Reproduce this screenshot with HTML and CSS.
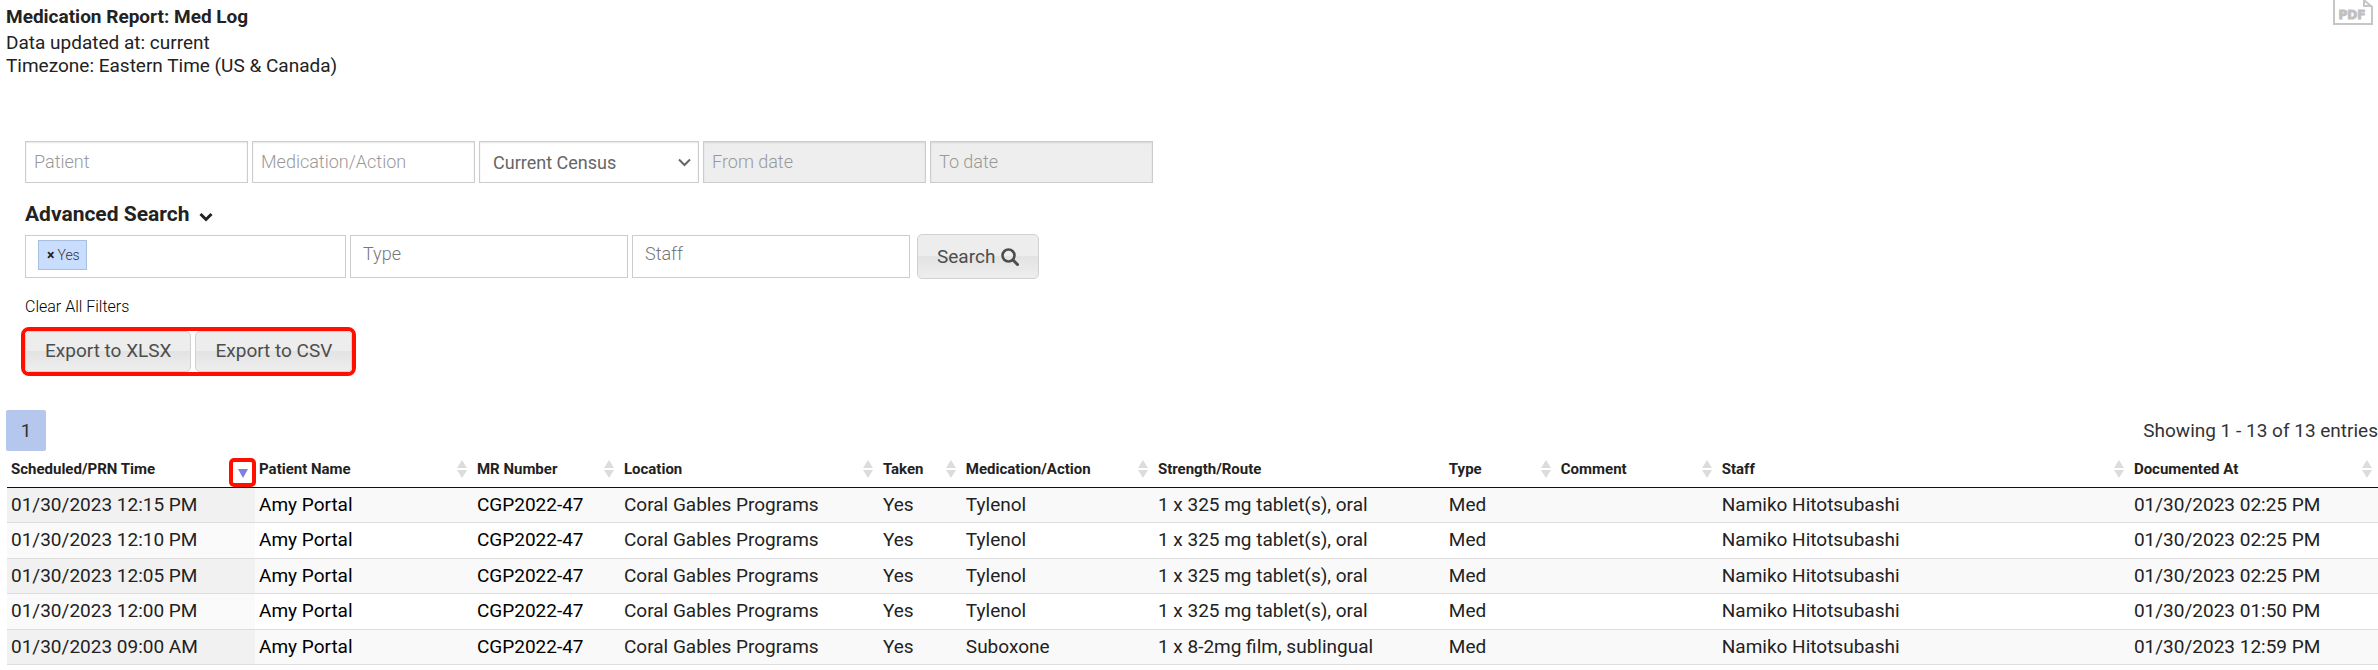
FILE: index.html
```html
<!DOCTYPE html>
<html lang="en">
<head>
<meta charset="utf-8">
<title>Medication Report: Med Log</title>
<link rel="stylesheet" href="styles.css">
</head>
<body>
<svg class="symbols" aria-hidden="true">
  <symbol id="sort-both" viewBox="0 0 10 18"><path d="M5 0L10 8H0zM0 10H10L5 18z" fill="#dcdcdc"/></symbol>
  <symbol id="sort-desc" viewBox="0 0 10 9"><path d="M0 0H10L5 9z" fill="#8080e0"/></symbol>
</svg>
<header class="report-header">
  <div class="report-info">
    <h1 class="report-title">Medication Report: Med Log</h1>
    <p class="report-line">Data updated at: current</p>
    <p class="report-line">Timezone: Eastern Time (US &amp; Canada)</p>
  </div>
  <button class="pdf-button" type="button" aria-label="Download PDF">
    <svg class="pdf-icon" viewBox="0 0 40 25"><path d="M1 0V24H39V7L31 0M31 0V6H39" fill="none" stroke="#c6c6c6" stroke-width="2"/><text class="pdf-label" x="19" y="19" text-anchor="middle">PDF</text></svg>
  </button>
</header>
<main>
  <form class="filters">
    <div class="filter-row">
      <input class="field" type="text" placeholder="Patient" aria-label="Patient">
      <input class="field" type="text" placeholder="Medication/Action" aria-label="Medication/Action">
      <span class="select-wrap">
        <select class="field census" aria-label="Census"><option>Current Census</option></select>
        <svg class="select-arrow" viewBox="0 0 13 9"><path d="M1 1.500L6.500 7L12 1.500" fill="none" stroke="#666" stroke-width="2"/></svg>
      </span>
      <input class="field" type="text" placeholder="From date" aria-label="From date" disabled>
      <input class="field" type="text" placeholder="To date" aria-label="To date" disabled>
    </div>
    <h2 class="advanced">Advanced Search
      <svg class="advanced-arrow" viewBox="0 0 14 10"><path d="M1.500 2L7 7.500L12.500 2" fill="none" stroke="#222" stroke-width="3"/></svg>
    </h2>
    <div class="filter-row advanced-row">
      <div class="picker picker-taken"><span class="tag"><button class="tag-remove" type="button" aria-label="Remove Yes">×</button>Yes</span></div>
      <input class="picker" type="text" placeholder="Type" aria-label="Type">
      <input class="picker" type="text" placeholder="Staff" aria-label="Staff">
      <button class="button search" type="button">Search
        <svg class="search-icon" viewBox="0 0 18 18"><circle cx="7.500" cy="7.500" r="6" fill="none" stroke="#4d4d4d" stroke-width="2.600"/><path d="M12 12L16.500 16.500" stroke="#4d4d4d" stroke-width="3" stroke-linecap="round"/></svg>
      </button>
    </div>
    <a class="clear" href="#">Clear All Filters</a>
    <div class="exports">
      <button class="button export" type="button">Export to XLSX</button>
      <button class="button export" type="button">Export to CSV</button>
    </div>
  </form>
  <section class="results">
    <div class="results-bar">
      <button class="page" type="button">1</button>
      <span class="summary">Showing 1 - 13 of 13 entries</span>
    </div>
    <div class="log-wrap">
    <table class="log">
      <colgroup><col class="c-time"><col class="c-patient"><col class="c-mr"><col class="c-location"><col class="c-taken"><col class="c-med"><col class="c-strength"><col class="c-type"><col class="c-comment"><col class="c-staff"><col class="c-doc"></colgroup>
      <thead>
        <tr>
          <th><div class="head">Scheduled/PRN Time<span class="callout"><svg class="sort-active"><use href="#sort-desc"/></svg></span></div></th>
          <th><div class="head">Patient Name<svg class="sort"><use href="#sort-both"/></svg></div></th>
          <th><div class="head">MR Number<svg class="sort"><use href="#sort-both"/></svg></div></th>
          <th><div class="head">Location<svg class="sort"><use href="#sort-both"/></svg></div></th>
          <th><div class="head">Taken<svg class="sort"><use href="#sort-both"/></svg></div></th>
          <th><div class="head">Medication/Action<svg class="sort"><use href="#sort-both"/></svg></div></th>
          <th><div class="head">Strength/Route</div></th>
          <th><div class="head">Type<svg class="sort"><use href="#sort-both"/></svg></div></th>
          <th><div class="head">Comment<svg class="sort"><use href="#sort-both"/></svg></div></th>
          <th><div class="head">Staff<svg class="sort"><use href="#sort-both"/></svg></div></th>
          <th><div class="head">Documented At<svg class="sort"><use href="#sort-both"/></svg></div></th>
        </tr>
      </thead>
      <tbody>
        <tr><td>01/30/2023 12:15 PM</td><td><a href="#">Amy Portal</a></td><td><a href="#">CGP2022-47</a></td><td>Coral Gables Programs</td><td>Yes</td><td>Tylenol</td><td>1 x 325 mg tablet(s), oral</td><td>Med</td><td></td><td>Namiko Hitotsubashi</td><td>01/30/2023 02:25 PM</td></tr>
        <tr><td>01/30/2023 12:10 PM</td><td><a href="#">Amy Portal</a></td><td><a href="#">CGP2022-47</a></td><td>Coral Gables Programs</td><td>Yes</td><td>Tylenol</td><td>1 x 325 mg tablet(s), oral</td><td>Med</td><td></td><td>Namiko Hitotsubashi</td><td>01/30/2023 02:25 PM</td></tr>
        <tr><td>01/30/2023 12:05 PM</td><td><a href="#">Amy Portal</a></td><td><a href="#">CGP2022-47</a></td><td>Coral Gables Programs</td><td>Yes</td><td>Tylenol</td><td>1 x 325 mg tablet(s), oral</td><td>Med</td><td></td><td>Namiko Hitotsubashi</td><td>01/30/2023 02:25 PM</td></tr>
        <tr><td>01/30/2023 12:00 PM</td><td><a href="#">Amy Portal</a></td><td><a href="#">CGP2022-47</a></td><td>Coral Gables Programs</td><td>Yes</td><td>Tylenol</td><td>1 x 325 mg tablet(s), oral</td><td>Med</td><td></td><td>Namiko Hitotsubashi</td><td>01/30/2023 01:50 PM</td></tr>
        <tr><td>01/30/2023 09:00 AM</td><td><a href="#">Amy Portal</a></td><td><a href="#">CGP2022-47</a></td><td>Coral Gables Programs</td><td>Yes</td><td>Suboxone</td><td>1 x 8-2mg film, sublingual</td><td>Med</td><td></td><td>Namiko Hitotsubashi</td><td>01/30/2023 12:59 PM</td></tr>
      </tbody>
    </table>
    </div>
  </section>
</main>
</body>
</html>
```

FILE: styles.css
```css
* { box-sizing: border-box; }
body {
  margin: 0;
  background: #fff;
  color: #222;
  font-family: Roboto, "Liberation Sans", sans-serif;
  font-size: 19px;
  line-height: 23px;
}
button, input, select { font: inherit; }
a { color: #000; text-decoration: none; }
.symbols { display: none; }

.report-header { display: flex; justify-content: space-between; align-items: flex-start; padding-left: 6px; }
.report-info { padding-top: 5px; }
.report-title { margin: 0 0 3px; font-size: 19px; line-height: 23px; font-weight: 700; }
.report-line { margin: 0; }
.pdf-button { display: flex; margin-right: 5px; padding: 0; border: 0; background: none; }
.pdf-icon { width: 40px; height: 25px; }
.pdf-label { font: 700 12px "DejaVu Sans", sans-serif; fill: #c0c0c0; stroke: #c0c0c0; stroke-width: 1px; }

.filters { padding: 64px 25px 0; }
.filter-row { display: flex; gap: 4px; }
.field {
  width: 223px;
  height: 42px;
  padding: 0 8px 2px;
  border: 1px solid #ccc;
  border-radius: 0;
  background: #fff;
  box-shadow: inset 0 1px 2px rgba(0, 0, 0, 0.1);
  font-size: 18px;
  font-weight: 300;
}
.field::placeholder { color: #999; opacity: 1; }
.field:disabled { background: #eee; }
.select-wrap { display: flex; position: relative; }
.census { width: 220px; padding: 0 13px; appearance: none; color: #666; font-weight: 400; }
.select-arrow { position: absolute; right: 8px; top: 17px; width: 13px; height: 9px; pointer-events: none; }

.advanced { display: flex; align-items: center; gap: 10px; margin: 19px 0 7px; font-size: 21px; line-height: 25px; font-weight: 700; }
.advanced-arrow { width: 14px; height: 10px; margin-top: 4px; }
.advanced-row { align-items: center; }
.picker {
  width: 278px;
  height: 43px;
  padding: 0 12px 6px;
  border: 1px solid #ccc;
  background: #fff;
  font-size: 18px;
  font-weight: 300;
}
.picker::placeholder { color: #777; opacity: 1; }
.picker-taken { width: 321px; padding-top: 4px; }
.tag {
  display: inline-flex;
  align-items: center;
  height: 30px;
  padding: 0 6px 0 8px;
  border: 1px solid #a9bfe0;
  background: #c9deff;
  color: #333;
  font-size: 14px;
}
.tag-remove { padding: 0 3px 0 0; border: 0; background: none; color: #222; font-size: 14px; font-weight: 700; }
.button {
  height: 45px;
  padding: 0 19px;
  border: 1px solid #d0d0d0;
  border-radius: 5px;
  background: linear-gradient(#ededed 50%, #e3e3e3 50%, #eee);
  color: #4d4d4d;
}
.search { display: flex; align-items: center; gap: 6px; margin-left: 3px; }
.search-icon { width: 18px; height: 18px; }
.clear { display: block; width: max-content; margin-top: 18px; font-size: 16px; line-height: 20px; font-weight: 300; }
.exports {
  display: flex;
  gap: 4px;
  width: max-content;
  margin: 10px 0 0 -4px;
  border: 4px solid #ff0f00;
  border-radius: 8px;
}
.export { height: 41px; padding-bottom: 3px; }

.results { padding-top: 34px; }
.results-bar { display: flex; justify-content: space-between; align-items: center; padding-left: 6px; }
.page { width: 40px; height: 41px; padding: 0; border: 0; border-radius: 2px; background: #b5c7ec; color: #333; }
.summary { color: #333; }
.log-wrap { padding-left: 7px; }
.log { width: 100%; table-layout: fixed; border-collapse: separate; border-spacing: 0; }
.log th { height: 37px; padding: 0 6px 0 4px; border-bottom: 1px solid #111; font-size: 15px; font-weight: 700; text-align: left; white-space: nowrap; }
.log td { height: 36px; padding: 0 4px 2px; border-bottom: 1px solid #ddd; white-space: nowrap; }
.log tbody tr:nth-child(odd) td { height: 35px; background: #f9f9f9; }
.log tbody tr:nth-child(even) td:first-child { background: #fafafa; }
.log tbody tr:nth-child(odd) td:first-child { background: #f1f1f1; }
.head { display: flex; justify-content: space-between; align-items: center; height: 36px; }
.sort { width: 10px; height: 18px; }
.sort-active { width: 10px; height: 9px; }
.callout { display: flex; align-items: center; justify-content: center; width: 27px; height: 29px; margin: 6px -7px 0 0; padding-top: 2px; border: 4px solid #ff0f00; border-radius: 5px; }
.c-time, .c-doc { width: 10.46%; }
.c-patient { width: 9.19%; }
.c-mr { width: 6.2%; }
.c-location { width: 10.92%; }
.c-taken { width: 3.5%; }
.c-med { width: 8.1%; }
.c-strength { width: 12.27%; }
.c-type { width: 4.72%; }
.c-comment { width: 6.79%; }
.c-staff { width: 17.38%; }
```
